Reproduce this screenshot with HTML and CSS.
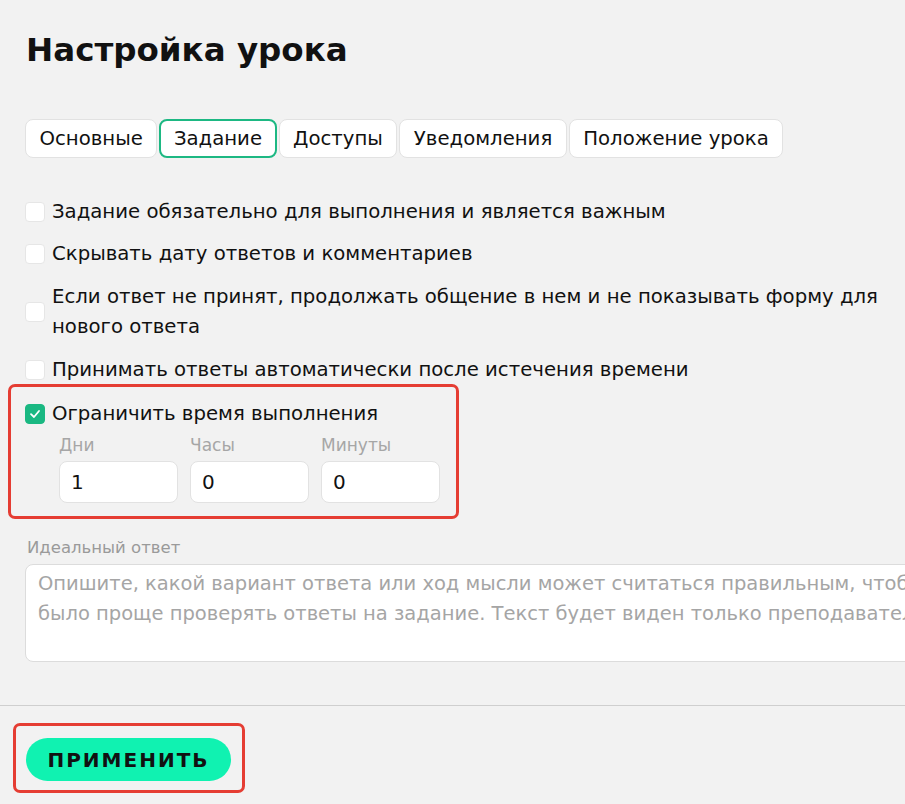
FILE: index.html
```html
<!DOCTYPE html>
<html lang="ru">
<head>
<meta charset="utf-8">
<title>Настройка урока</title>
<link rel="stylesheet" href="styles.css">
</head>
<body>
<div class="page">
  <div class="content">
    <h1 class="title">Настройка урока</h1>
    <div class="tabs">
      <button class="tab">Основные</button>
      <button class="tab tab-active">Задание</button>
      <button class="tab">Доступы</button>
      <button class="tab">Уведомления</button>
      <button class="tab">Положение урока</button>
    </div>
    <div class="options">
      <label class="opt"><span class="box"></span><span class="opt-text">Задание обязательно для выполнения и является важным</span></label>
      <label class="opt"><span class="box"></span><span class="opt-text">Скрывать дату ответов и комментариев</span></label>
      <label class="opt opt-multi"><span class="box"></span><span class="opt-text">Если ответ не принят, продолжать общение в нем и не показывать форму для нового ответа</span></label>
      <label class="opt"><span class="box"></span><span class="opt-text">Принимать ответы автоматически после истечения времени</span></label>
      <div class="limit">
        <label class="opt"><span class="box box-checked"><svg width="14" height="14" viewBox="0 0 14 14"><path d="M3 7.2 L6 10 L11 4" fill="none" stroke="#fff" stroke-width="1.8" stroke-linecap="round" stroke-linejoin="round"/></svg></span><span class="opt-text">Ограничить время выполнения</span></label>
        <div class="time-fields">
          <div class="field"><span class="field-label">Дни</span><div class="input">1</div></div>
          <div class="field"><span class="field-label">Часы</span><div class="input">0</div></div>
          <div class="field"><span class="field-label">Минуты</span><div class="input">0</div></div>
        </div>
      </div>
    </div>
    <div class="ideal">
      <div class="ideal-label">Идеальный ответ</div>
      <div class="textarea">Опишите, какой вариант ответа или ход мысли может считаться правильным, чтобы было проще проверять ответы на задание. Текст будет виден только преподавателям.</div>
    </div>
  </div>
  <div class="footer">
    <div class="apply-wrap"><button class="apply">Применить</button></div>
  </div>
</div>
</body>
</html>
```
FILE: styles.css
```css
html, body {
  margin: 0;
  padding: 0;
  background: #f2f2f2;
  overflow: hidden;
}
body {
  font-family: "DejaVu Sans", "Noto Sans", sans-serif;
  color: #111;
  width: 905px;
  height: 804px;
}
.page {
  width: 1100px;
}
.content {
  padding: 24px 0 0 25px;
  width: 1000px;
}
.title {
  margin: 0;
  font-size: 32.5px;
  font-weight: 700;
  line-height: 52px;
  padding-left: 1px;
}
.tabs {
  display: flex;
  gap: 2px;
  margin-top: 43px;
}
.tab {
  font-family: inherit;
  font-size: 19.7px;
  color: #111;
  background: #fff;
  border: 1px solid #e2e2e2;
  border-radius: 8px;
  height: 39px;
  padding: 0 13.5px;
  line-height: 37px;
}
.tab-active {
  border: 2px solid #1db883;
  padding: 0 12.5px;
  line-height: 35px;
}
.options {
  margin-top: 33px;
  display: flex;
  flex-direction: column;
}
.opt {
  display: flex;
  align-items: center;
  gap: 7px;
  font-size: 19.7px;
  line-height: 30px;
  padding: 6px 0 6px;
}
.opt-multi {
  padding: 7px 0;
}
.box {
  width: 20px;
  height: 20px;
  flex: none;
  background: #fff;
  border: 1px solid #e6e6e6;
  border-radius: 4px;
  box-sizing: border-box;
  display: flex;
  align-items: center;
  justify-content: center;
}
.box-checked {
  background: #1ab882;
  border-color: #1ab882;
}
.opt-text {
  max-width: 840px;
}
.limit {
  margin-left: -17px;
  width: 451px;
  box-sizing: border-box;
  border: 3px solid #e53d33;
  border-radius: 7px;
  padding: 12px 0 13px 14px;
  margin-top: -7px;
}
.limit .opt {
  padding: 0;
}
.time-fields {
  display: flex;
  gap: 12px;
  padding-left: 34px;
  margin-top: 5px;
}
.field {
  display: flex;
  flex-direction: column;
}
.field-label {
  font-size: 17px;
  color: #a6a6a6;
  line-height: 22px;
  margin-bottom: 5px;
}
.input {
  width: 119px;
  height: 42px;
  box-sizing: border-box;
  background: #fff;
  border: 1px solid #e2e2e2;
  border-radius: 8px;
  padding: 0 11px;
  font-size: 20px;
  line-height: 40px;
}
.ideal {
  margin-top: 18px;
}
.ideal-label {
  font-size: 16.5px;
  color: #9a9a9a;
  line-height: 22px;
  padding-left: 2px;
  margin-bottom: 5px;
}
.textarea {
  height: 98px;
  box-sizing: border-box;
  background: #fff;
  border: 1px solid #dcdcdc;
  border-radius: 8px;
  padding: 4px 12px;
  font-size: 19.5px;
  line-height: 30px;
  color: #a5a5a5;
  width: 960px;
}
.footer {
  margin-top: 43px;
  border-top: 1px solid #cfcfcf;
  padding: 17px 0 0 13px;
}
.apply-wrap {
  display: inline-block;
  border: 3px solid #e53d33;
  border-radius: 7px;
  padding: 12px 11px 9px 10px;
}
.apply {
  font-family: "DejaVu Sans", sans-serif;
  font-weight: 700;
  font-size: 20px;
  letter-spacing: 2px;
  text-transform: uppercase;
  background: #10f2b1;
  color: #111;
  border: none;
  border-radius: 22px;
  height: 43px;
  width: 205px;
  display: block;
}
```
